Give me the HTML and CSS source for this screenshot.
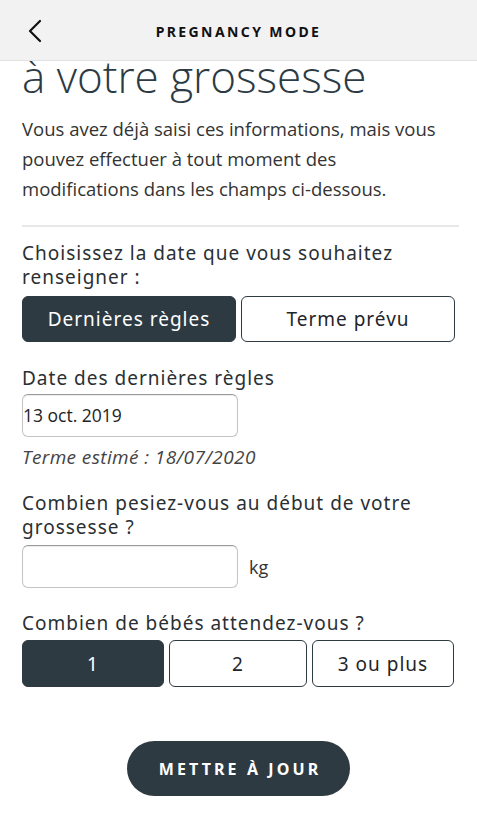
FILE: index.html
```html
<!DOCTYPE html>
<html lang="fr">
<head>
<meta charset="utf-8">
<title>Pregnancy mode</title>
<link rel="stylesheet" href="styles.css">
</head>
<body>
<header class="topbar">
  <button class="back" aria-label="Retour">
    <svg width="16" height="24" viewBox="0 0 16 24"><path d="M13 2 L3 12 L13 22" fill="none" stroke="#111" stroke-width="2.2" stroke-linecap="round" stroke-linejoin="round"/></svg>
  </button>
  <h1 class="title">PREGNANCY MODE</h1>
</header>
<main class="content">
  <h2 class="heading">à votre grossesse</h2>
  <p class="intro">Vous avez déjà saisi ces informations, mais vous pouvez effectuer à tout moment des modifications dans les champs ci-dessous.</p>
  <hr class="divider">
  <p class="label label-first">Choisissez la date que vous souhaitez renseigner :</p>
  <div class="seg seg-2">
    <button class="opt active">Dernières règles</button>
    <button class="opt">Terme prévu</button>
  </div>
  <p class="label label-date">Date des dernières règles</p>
  <div class="field field-date">13 oct. 2019</div>
  <p class="estimate">Terme estimé : 18/07/2020</p>
  <p class="label label-weight">Combien pesiez-vous au début de votre grossesse ?</p>
  <div class="weight-row">
    <div class="field"></div>
    <span class="unit">kg</span>
  </div>
  <p class="label label-babies">Combien de bébés attendez-vous ?</p>
  <div class="seg seg-3">
    <button class="opt active">1</button>
    <button class="opt">2</button>
    <button class="opt">3 ou plus</button>
  </div>
  <div class="actions">
    <button class="update">METTRE À JOUR</button>
  </div>
</main>
</body>
</html>
```
FILE: styles.css
```css
* { box-sizing: border-box; }
html, body { margin: 0; padding: 0; background: #fff; }
body {
  font-family: "Noto Sans", "Open Sans", sans-serif;
  color: #2a2f33;
  width: 477px;
  overflow: hidden;
}
.topbar {
  position: fixed;
  top: 0; left: 0; right: 0;
  height: 61px;
  background: #f2f2f2;
  border-bottom: 1px solid #e2e2e2;
  display: flex;
  align-items: center;
  justify-content: center;
  z-index: 2;
}
.back {
  position: absolute;
  left: 26px;
  top: 19px;
  background: none;
  border: 0;
  padding: 0;
  width: 18px;
  height: 24px;
}
.title {
  margin: 0;
  font-size: 14px;
  font-weight: 700;
  letter-spacing: 2.4px;
  color: #111;
  padding-top: 2px;
}
.content {
  padding: 50px 22px 40px;
}
.heading {
  margin: 0;
  font-family: "Open Sans", sans-serif;
  font-weight: 300;
  font-size: 44px;
  line-height: 52px;
  color: #2c3a44;
}
.intro {
  margin: 12px 0 0;
  font-family: "Open Sans", sans-serif;
  font-size: 18.5px;
  line-height: 30px;
  color: #333;
}
.divider {
  border: 0;
  height: 2px;
  background: #e8e8e8;
  margin: 21px 0 0;
  width: 437px;
}
.label {
  margin: 0;
  font-size: 19px;
  line-height: 24px;
  letter-spacing: 1px;
  color: #2a2f33;
}
.label-first { margin-top: 14px; }
.label-date { margin-top: 24px; }
.label-weight { margin-top: 22px; }
.label-babies { margin-top: 23px; }
.seg {
  display: grid;
  gap: 5px;
  margin-top: 7px;
}
.seg-2 { grid-template-columns: 214px 214px; height: 46px; }
.seg-3 { grid-template-columns: 142px 138px 142px; height: 47px; margin-top: 5px; gap: 5px; }
.opt {
  font-family: "Noto Sans", sans-serif;
  font-size: 19px;
  letter-spacing: 1px;
  border: 1.5px solid #2e3a42;
  border-radius: 6px;
  background: #fff;
  color: #1f2529;
  padding: 0;
}
.opt.active {
  background: #2e3a42;
  color: #fff;
}
.field {
  width: 216px;
  height: 43px;
  border: 1px solid #c4c4c4;
  border-top-color: #9a9a9a;
  border-radius: 6px;
  font-family: "Open Sans", sans-serif;
  font-size: 17.5px;
  line-height: 40px;
  color: #222;
  padding: 0;
  box-shadow: inset 0 1px 1px rgba(0,0,0,0.08);
}
.field-date { margin-top: 4px; }
.estimate {
  margin: 8px 0 0;
  font-family: "Open Sans", sans-serif;
  font-style: italic;
  font-size: 19px;
  letter-spacing: 0.4px;
  line-height: 24px;
  color: #444;
}
.weight-row {
  display: flex;
  align-items: center;
  gap: 11px;
  margin-top: 6px;
}
.unit {
  font-family: "Open Sans", sans-serif;
  font-size: 18px;
  line-height: 24px;
  color: #333;
}
.actions {
  display: flex;
  justify-content: center;
  margin-top: 54px;
}
.update {
  width: 223px;
  height: 55px;
  border: 0;
  border-radius: 28px;
  background: #2e3a42;
  color: #fff;
  font-family: "Noto Sans", sans-serif;
  font-weight: 700;
  font-size: 16px;
  letter-spacing: 3.1px;
  padding: 0 0 0 3px;
}
```
